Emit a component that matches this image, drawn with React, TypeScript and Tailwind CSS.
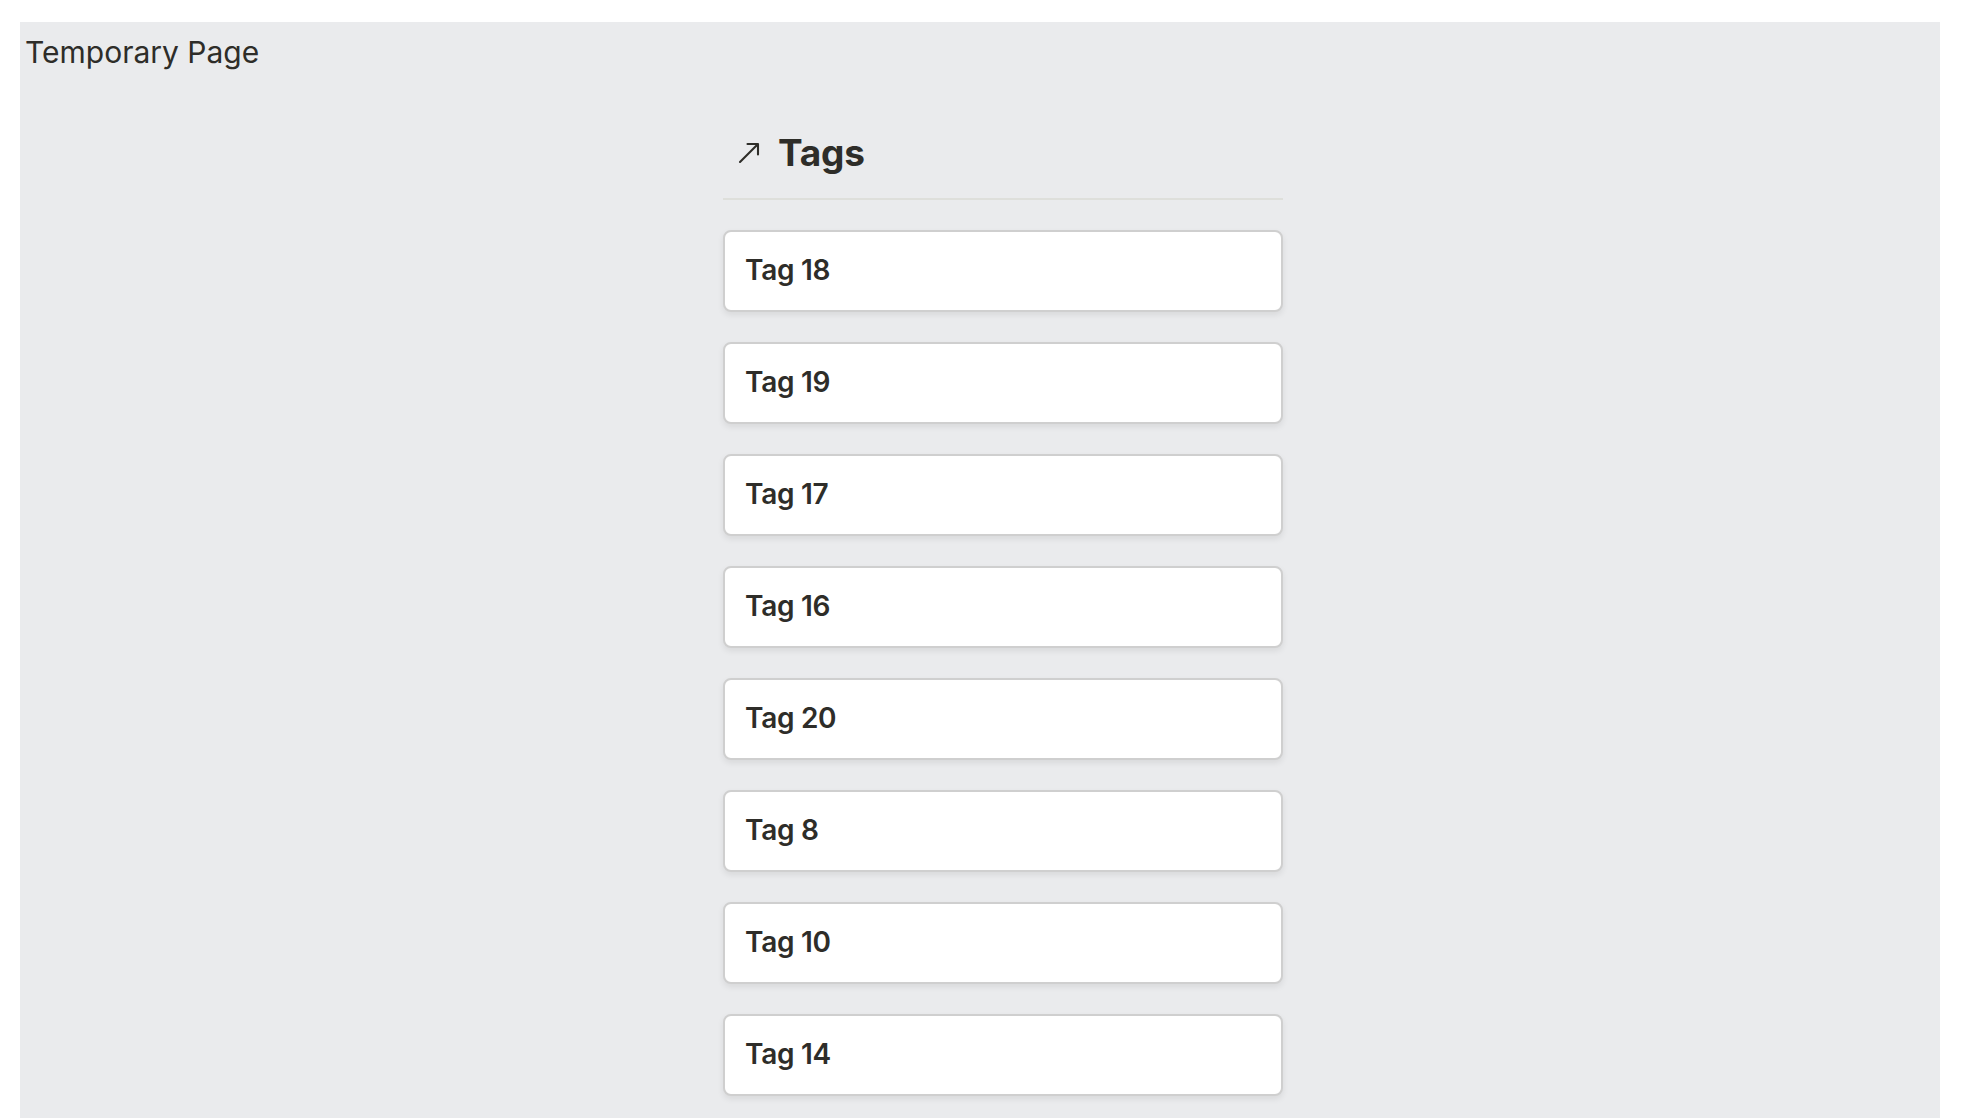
const tags = ['Tag 18', 'Tag 19', 'Tag 17', 'Tag 16', 'Tag 20', 'Tag 8', 'Tag 10', 'Tag 14'];

function ArrowIcon() {
  return (
    <svg width="22" height="22" viewBox="0 0 22 22" fill="none" className="shrink-0">
      <path
        d="M2 20 L20 2 M9.5 2 H20 V12.5"
        stroke="#2e2d29"
        strokeWidth="2.1"
        strokeLinecap="round"
        strokeLinejoin="round"
      />
    </svg>
  );
}

export default function App() {
  return (
    <div
      className="bg-white pt-[22px] pl-[20px] pr-[22px] text-[#2e2d29]"
      style={{ fontFamily: 'Inter, "Noto Sans", sans-serif' }}
    >
      <div className="bg-[#eaebed] min-h-[1096px] pb-[40px]">
        {/* Page title */}
        <div className="pt-[12px] pl-[5px] text-[30px] leading-[36px]">Temporary Page</div>

        {/* Tags column */}
        <div className="ml-[703px] w-[560px] mt-[60px]">
          <div className="flex items-center gap-[18px] pl-[15px] pb-[22px] border-b-2 border-[#dedfdb]">
            <ArrowIcon />
            <h2 className="text-[37px] leading-[46px] font-bold tracking-[-0.2px]">Tags</h2>
          </div>

          <div className="mt-[30px] flex flex-col gap-[30px]">
            {tags.map((tag) => (
              <div
                key={tag}
                className="h-[82px] bg-white border-2 border-[#cfcfcf] rounded-lg shadow-[0_3px_6px_rgba(0,0,0,0.08)] flex items-center px-[20px] pb-[2px]"
              >
                <span className="text-[28px] font-[560] tracking-[-0.3px]">{tag}</span>
              </div>
            ))}
          </div>
        </div>
      </div>
    </div>
  );
}
